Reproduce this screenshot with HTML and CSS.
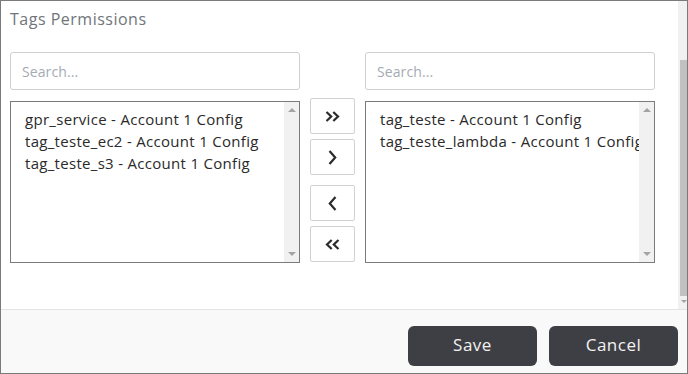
FILE: index.html
```html
<!DOCTYPE html>
<html lang="en">
<head>
<meta charset="utf-8">
<title>Tags Permissions</title>
<link rel="stylesheet" href="styles.css">
</head>
<body>
<div class="dialog">
  <div class="scroller">
    <div class="content">
      <h2 class="title">Tags Permissions</h2>
      <div class="searches">
        <input class="search" type="text" placeholder="Search...">
        <input class="search" type="text" placeholder="Search...">
      </div>
      <div class="lists">
        <div class="list" role="listbox">
          <div class="options">
            <div class="option" role="option">gpr_service - Account 1 Config</div>
            <div class="option" role="option">tag_teste_ec2 - Account 1 Config</div>
            <div class="option" role="option">tag_teste_s3 - Account 1 Config</div>
          </div>
          <div class="list-bar"><span class="arrow up"></span><span class="arrow down"></span></div>
        </div>
        <div class="moves">
          <div class="move-group">
            <button class="move" type="button" aria-label="Move all right">
              <svg width="15" height="11" viewBox="0 0 15 11"><polyline points="1.5,1 6.2,5.5 1.5,10" /><polyline points="8.3,1 13,5.5 8.3,10" /></svg>
            </button>
            <button class="move" type="button" aria-label="Move right">
              <svg width="9" height="15" viewBox="0 0 9 15"><polyline points="1.5,1 7.2,7.5 1.5,14" /></svg>
            </button>
          </div>
          <div class="move-group">
            <button class="move" type="button" aria-label="Move left">
              <svg width="9" height="15" viewBox="0 0 9 15"><polyline points="7.5,1 1.8,7.5 7.5,14" /></svg>
            </button>
            <button class="move" type="button" aria-label="Move all left">
              <svg width="15" height="11" viewBox="0 0 15 11"><polyline points="6.7,1 2,5.5 6.7,10" /><polyline points="13.5,1 8.8,5.5 13.5,10" /></svg>
            </button>
          </div>
        </div>
        <div class="list" role="listbox">
          <div class="options">
            <div class="option" role="option">tag_teste - Account 1 Config</div>
            <div class="option" role="option">tag_teste_lambda - Account 1 Config</div>
          </div>
          <div class="list-bar"><span class="arrow up"></span><span class="arrow down"></span></div>
        </div>
      </div>
    </div>
    <div class="page-bar">
      <div class="page-thumb"></div>
      <span class="page-arrow"></span>
    </div>
  </div>
  <div class="footer">
    <button class="action" type="button">Save</button>
    <button class="action" type="button">Cancel</button>
  </div>
</div>
</body>
</html>
```

FILE: styles.css
```css
html, body {
  margin: 0;
  padding: 0;
  background: #ffffff;
}

body {
  font-family: "Open Sans", "Noto Sans", sans-serif;
  color: #2a2a2a;
}

.dialog {
  box-sizing: border-box;
  width: 688px;
  height: 374px;
  border: 1px solid #7a7a7a;
  display: flex;
  flex-direction: column;
  overflow: hidden;
}

.scroller {
  height: 308px;
  flex: none;
  display: flex;
  overflow: hidden;
}

.content {
  flex: 1;
  min-width: 0;
  padding: 0 23px 0 9px;
}

/* page scrollbar */
.page-bar {
  width: 9px;
  flex: none;
  background: #f1f1f1;
  display: flex;
  flex-direction: column;
  align-items: flex-end;
}

.page-thumb {
  width: 7px;
  height: 236px;
  margin-top: 59px;
  background: #c1c1c1;
}

.page-arrow {
  margin-top: 4px;
  width: 0;
  height: 0;
  border-left: 3px solid transparent;
  border-right: 3px solid transparent;
  border-top: 3px solid #a3a3a3;
}

.title {
  margin: 0;
  padding-top: 7px;
  font-size: 16px;
  line-height: 22px;
  font-weight: 400;
  letter-spacing: 0.5px;
  color: #70757b;
}

.searches {
  display: flex;
  justify-content: space-between;
  margin-top: 22px;
}

.search {
  box-sizing: border-box;
  width: 290px;
  height: 38px;
  margin: 0;
  border: 1px solid #cfcfcf;
  border-radius: 3px;
  padding: 0 11px;
  font-family: inherit;
  font-size: 14px;
  letter-spacing: 0.1px;
  color: #2a2a2a;
  outline: none;
}

.search::placeholder {
  color: #a5abb3;
}

.lists {
  display: flex;
  align-items: flex-start;
  gap: 10px;
  margin-top: 8px;
}

.list {
  box-sizing: border-box;
  width: 290px;
  height: 162px;
  margin-top: 3px;
  border: 1px solid #7b7b7b;
  background: #ffffff;
  display: flex;
  flex: none;
}

.options {
  flex: 1;
  min-width: 0;
  overflow: hidden;
  padding: 6px 0 0 14px;
}

.option {
  font-size: 15px;
  line-height: 22px;
  letter-spacing: 0.3px;
  white-space: nowrap;
  color: #2a2a2a;
}

.list-bar {
  width: 15px;
  flex: none;
  background: #f1f1f1;
  display: flex;
  flex-direction: column;
  justify-content: space-between;
  align-items: center;
  padding: 6px 0 6px;
}

.arrow {
  width: 0;
  height: 0;
  border-left: 4px solid transparent;
  border-right: 4px solid transparent;
}

.arrow.up {
  border-bottom: 4px solid #a3a3a3;
}

.arrow.down {
  border-top: 4px solid #a3a3a3;
}

.moves {
  width: 45px;
  flex: none;
  display: flex;
  flex-direction: column;
  gap: 10px;
}

.move-group {
  display: flex;
  flex-direction: column;
  gap: 5px;
}

.move {
  box-sizing: border-box;
  width: 45px;
  height: 36px;
  padding: 0;
  background: #ffffff;
  border: 1px solid #d2d2d2;
  border-radius: 2px;
  display: flex;
  align-items: center;
  justify-content: center;
  cursor: pointer;
}

.move svg {
  display: block;
  fill: none;
  stroke: #2b2b2b;
  stroke-width: 2.2;
  stroke-linecap: butt;
  stroke-linejoin: miter;
}

.footer {
  flex: 1;
  background: #f9f9f9;
  border-top: 1px solid #e4e4e4;
  display: flex;
  justify-content: flex-end;
  align-items: flex-start;
  gap: 12px;
  padding: 16px 9px 0 0;
}

.action {
  width: 129px;
  height: 40px;
  padding: 0 0 3px;
  border: none;
  border-radius: 6px;
  background: #3e3f44;
  color: #f2f2f2;
  font-family: inherit;
  font-size: 17px;
  letter-spacing: 0.5px;
  cursor: pointer;
}
```
